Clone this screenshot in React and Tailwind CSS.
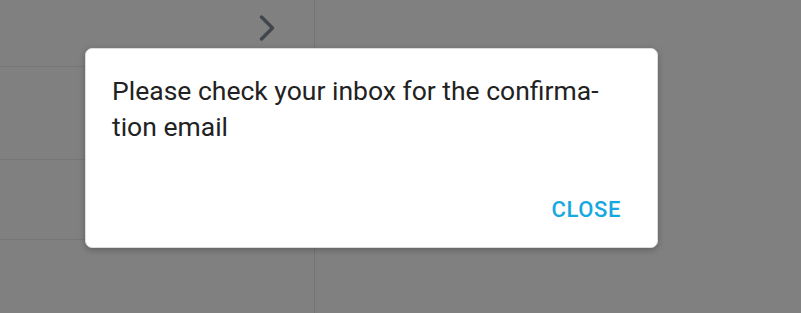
import { ChevronRight } from "lucide-react";

export default function App() {
  return (
    <div
      className="relative h-[313px] w-[801px] overflow-hidden bg-[#808080]"
      style={{ fontFamily: "Roboto, 'Liberation Sans', sans-serif" }}
    >
      {/* fondo: lista a la izquierda */}
      <div className="flex h-full">
        <div className="flex w-[315px] flex-col border-r border-[#747474]">
          <div className="flex h-[67px] items-start justify-end border-b border-[#767676] pr-[25px] pt-[6px]">
            <ChevronRight className="h-[44px] w-[44px] text-[#41454c]" strokeWidth={1.9} />
          </div>
          <div className="h-[93px] border-b border-[#767676]" />
          <div className="h-[80px] border-b border-[#767676]" />
        </div>
        <div className="flex-1" />
      </div>

      {/* dialogo */}
      <div className="absolute left-[85px] top-[48px] flex h-[200px] w-[573px] flex-col rounded-[7px] border border-[#dcdcdc] bg-white shadow-[0_2px_6px_rgba(0,0,0,0.25)]">
        <p className="px-[26px] pt-[24px] text-[26.5px] leading-[36px] text-[#222]">
          Please check your inbox for the confirma-
          <br />
          tion email
        </p>
        <div className="mt-auto flex justify-end pb-[26px] pr-[36px]">
          <button className="text-[22px] font-medium leading-none tracking-[0.6px] text-[#16a8e0]">
            CLOSE
          </button>
        </div>
      </div>
    </div>
  );
}
